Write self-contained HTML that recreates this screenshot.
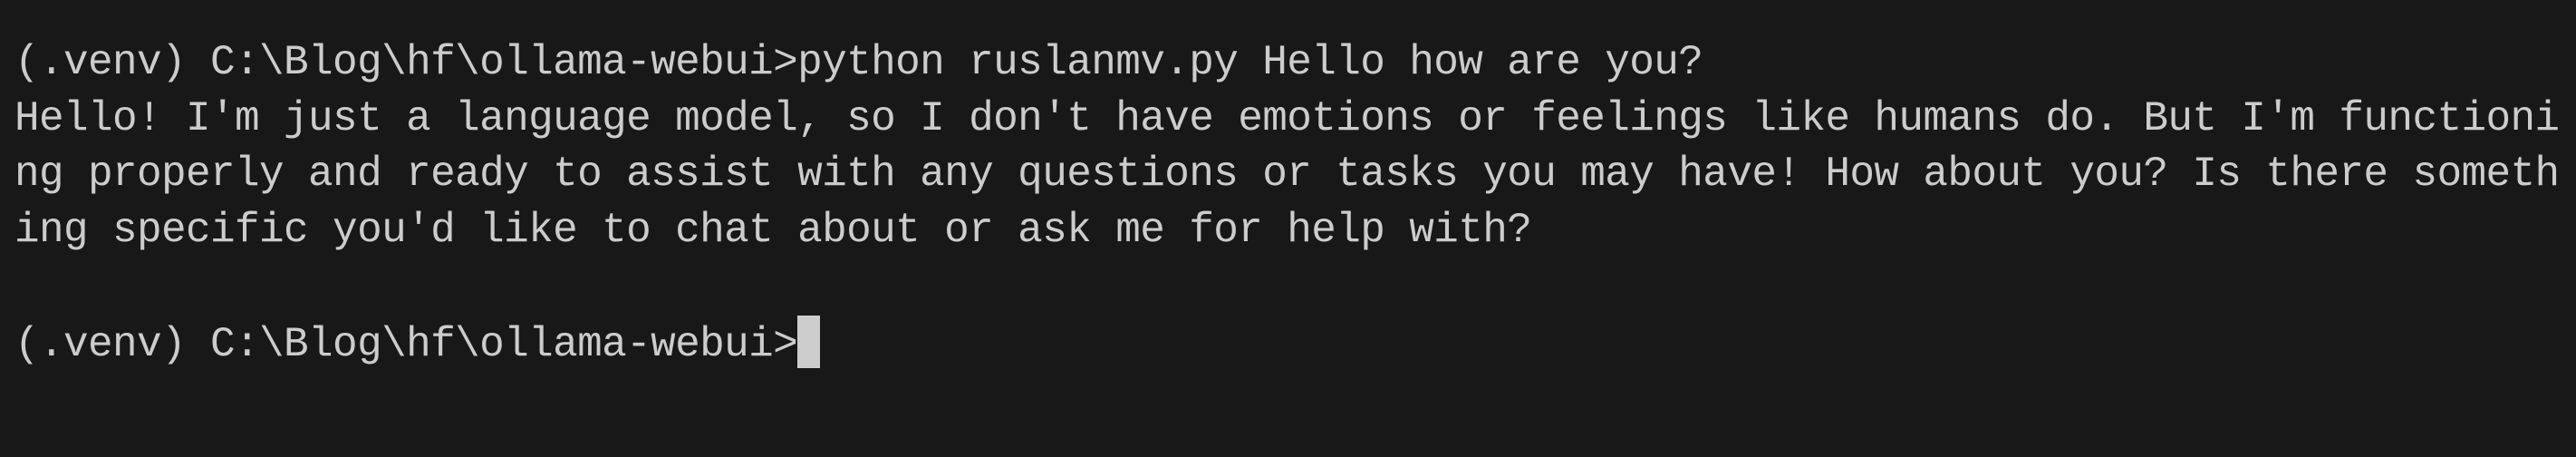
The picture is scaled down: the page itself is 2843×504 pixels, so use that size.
<!DOCTYPE html>
<html><head><style>
html,body{margin:0;padding:0;background:#181818;width:2843px;height:504px;overflow:hidden}
pre{position:absolute;left:16px;top:39px;margin:0;font-family:"Liberation Mono",monospace;font-size:46px;letter-spacing:-0.6px;line-height:61.7px;color:#cccccc;white-space:pre}
.cur{display:inline-block;width:25px;height:58px;background:#cccccc;vertical-align:-14px}
</style></head><body>
<pre>(.venv) C:\Blog\hf\ollama-webui&gt;python ruslanmv.py Hello how are you?
Hello! I'm just a language model, so I don't have emotions or feelings like humans do. But I'm functioni
ng properly and ready to assist with any questions or tasks you may have! How about you? Is there someth
ing specific you'd like to chat about or ask me for help with?

(.venv) C:\Blog\hf\ollama-webui&gt;<span class="cur"></span></pre>
</body></html>
